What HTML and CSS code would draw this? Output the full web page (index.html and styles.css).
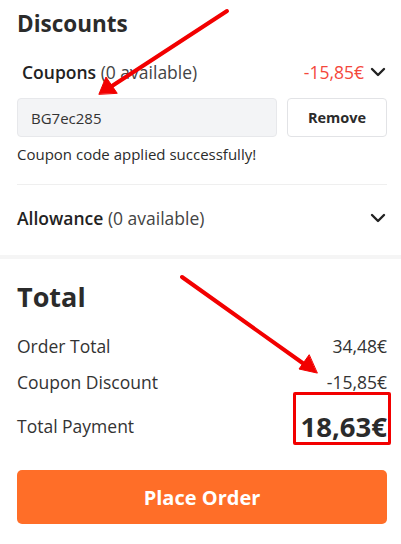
FILE: index.html
```html
<!DOCTYPE html>
<html>
<head>
<meta charset="utf-8">
<link rel="stylesheet" href="styles.css">
</head>
<body>
<div class="page">
  <section class="discounts">
    <h2 class="title">Discounts</h2>
    <div class="row coupons">
      <div class="label"><span class="strong">Coupons</span> <span class="muted">(0 available)</span></div>
      <div class="right"><span class="neg">-15,85€</span>
        <svg class="chev" width="16" height="10" viewBox="0 0 16 10"><path d="M2 2 L8 8 L14 2" fill="none" stroke="#222" stroke-width="2.4" stroke-linecap="round" stroke-linejoin="round"/></svg>
      </div>
    </div>
    <div class="code-row">
      <div class="input">BG7ec285</div>
      <button class="remove">Remove</button>
    </div>
    <p class="success">Coupon code applied successfully!</p>
    <div class="divider"></div>
    <div class="row allowance">
      <div class="label"><span class="strong">Allowance</span> <span class="muted">(0 available)</span></div>
      <svg class="chev" width="16" height="10" viewBox="0 0 16 10"><path d="M2 2 L8 8 L14 2" fill="none" stroke="#222" stroke-width="2.4" stroke-linecap="round" stroke-linejoin="round"/></svg>
    </div>
  </section>
  <div class="band"></div>
  <section class="total">
    <h2 class="title big">Total</h2>
    <div class="line"><span>Order Total</span><span>34,48€</span></div>
    <div class="line"><span>Coupon Discount</span><span>-15,85€</span></div>
    <div class="line pay"><span>Total Payment</span><span class="amount">18,63€</span></div>
    <button class="order">Place Order</button>
  </section>
  <div class="highlight"></div>
  <svg class="arrows" width="401" height="544" viewBox="0 0 401 544">
    <g stroke="#f20000" stroke-width="4" stroke-linecap="round" fill="#f20000">
      <line x1="227" y1="11" x2="112" y2="86"/>
      <polygon points="99,94 106,77 117,93" stroke-width="1"/>
      <line x1="182" y1="277" x2="304" y2="364"/>
      <polygon points="317,373 299,369 309,355" stroke-width="1"/>
    </g>
  </svg>
</div>
</body>
</html>
```

FILE: styles.css
```css
* { box-sizing: border-box; }
html, body { margin: 0; padding: 0; background: #fff; }
body {
  font-family: "Open Sans", "Noto Sans", sans-serif;
  color: #2b2b2b;
  width: 401px;
  height: 544px;
  overflow: hidden;
}
.page { position: relative; }
.discounts { padding: 0 14px 0 17px; }
.title {
  margin: 0;
  font-size: 22.5px;
  font-weight: 700;
  line-height: 32px;
  padding-top: 8px;
  color: #2b2b2b;
}
.row {
  display: flex;
  justify-content: space-between;
  align-items: center;
}
.coupons { margin-top: 17px; height: 30px; padding-left: 5px; }
.label { font-size: 17.5px; }
.strong { font-weight: 600; color: #222; }
.muted { color: #444; }
.right { display: flex; align-items: center; gap: 6px; }
.neg { color: #f4473b; font-size: 17.5px; }
.chev { display: block; margin-right: 1px; }
.code-row { display: flex; gap: 10px; margin-top: 11px; }
.input {
  flex: 0 0 260px;
  height: 39px;
  background: #f3f4f6;
  border: 1px solid #e7e8eb;
  border-radius: 4px;
  font-size: 15px;
  color: #333;
  padding-left: 13px;
  display: flex;
  align-items: center;
}
.remove {
  flex: 1;
  height: 39px;
  background: #fff;
  border: 1px solid #e2e3e6;
  border-radius: 4px;
  font-family: inherit;
  font-weight: 700;
  font-size: 14.5px;
  color: #2b2b2b;
}
.success { margin: 7px 0 0; font-size: 15px; color: #2b2b2b; line-height: 20px; }
.divider { height: 1px; background: #efefef; margin-top: 20px; }
.allowance { height: 65px; }
.band { height: 4px; background: #f5f5f5; margin-top: 5px; }
.total { padding: 0 14px 0 17px; }
.big { font-size: 27px; line-height: 38px; padding-top: 19px; }
.line {
  display: flex;
  justify-content: space-between;
  align-items: center;
  font-size: 17.5px;
  color: #333;
  height: 36px;
}
.line:nth-of-type(1) { margin-top: 12px; }
.pay { height: 52px; }
.amount { font-size: 27.5px; font-weight: 700; color: #2b2b2b; }
.order {
  display: block;
  width: 100%;
  height: 54px;
  margin-top: 18px;
  border: none;
  border-radius: 5px;
  background: #ff6e28;
  color: #fff;
  font-family: inherit;
  font-weight: 700;
  font-size: 20px;
}
.highlight {
  position: absolute;
  left: 293px;
  top: 392px;
  width: 98px;
  height: 53px;
  border: 3px solid #f20000;
  border-radius: 2px;
}
.arrows { position: absolute; left: 0; top: 0; pointer-events: none; }
```
